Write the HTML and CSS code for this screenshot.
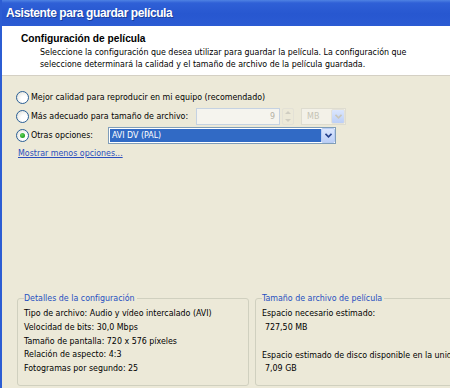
FILE: index.html
```html
<!DOCTYPE html>
<html lang="es">
<head>
    <meta charset="UTF-8">
    <meta name="viewport" content="width=device-width, initial-scale=1.0">
    <title>Asistente para guardar película</title>
    <link rel="stylesheet" href="styles.css">
</head>
<body>
    <div class="window">
        <div class="titlebar">Asistente para guardar película</div>

        <div class="header">
            <div class="header-title">Configuración de película</div>
            <div class="header-desc">
                Seleccione la configuración que desea utilizar para guardar la película. La configuración que<br>
                seleccione determinará la calidad y el tamaño de archivo de la película guardada.
            </div>
        </div>

        <div class="content">
            <div class="options">
                <div class="option-row">
                    <span class="radio"></span>
                    <span class="label">Mejor calidad para reproducir en mi equipo (recomendado)</span>
                </div>
                <div class="option-row">
                    <span class="radio"></span>
                    <span class="label">Más adecuado para tamaño de archivo:</span>
                    <span class="size-input">9</span>
                    <span class="spinner">
                        <span class="spin-arrow up"></span>
                        <span class="spin-arrow down"></span>
                    </span>
                    <span class="combo combo-disabled">
                        <span class="combo-text">MB</span>
                        <span class="combo-button">
                            <svg width="7" height="5" viewBox="0 0 7 5"><path d="M0.5 0.8 L3.5 3.8 L6.5 0.8" fill="none" stroke="#c9c7ba" stroke-width="1.6"/></svg>
                        </span>
                    </span>
                </div>
                <div class="option-row">
                    <span class="radio checked"></span>
                    <span class="label label-short">Otras opciones:</span>
                    <span class="combo combo-format">
                        <span class="combo-text selected">AVI DV (PAL)</span>
                        <span class="combo-button">
                            <svg width="7" height="5" viewBox="0 0 7 5"><path d="M0.5 0.8 L3.5 3.8 L6.5 0.8" fill="none" stroke="#24408c" stroke-width="1.6"/></svg>
                        </span>
                    </span>
                </div>
                <a class="link" href="#">Mostrar menos opciones...</a>
            </div>

            <div class="groups">
                <fieldset class="group group-details">
                    <legend>Detalles de la configuración</legend>
                    <div>Tipo de archivo: Audio y vídeo intercalado (AVI)</div>
                    <div>Velocidad de bits: 30,0 Mbps</div>
                    <div>Tamaño de pantalla: 720 x 576 píxeles</div>
                    <div>Relación de aspecto: 4:3</div>
                    <div>Fotogramas por segundo: 25</div>
                </fieldset>
                <fieldset class="group group-size">
                    <legend>Tamaño de archivo de película</legend>
                    <div>Espacio necesario estimado:</div>
                    <div class="value">727,50 MB</div>
                    <div class="blank"></div>
                    <div class="nowrap">Espacio estimado de disco disponible en la unidad C:</div>
                    <div class="value">7,09 GB</div>
                </fieldset>
            </div>
        </div>
    </div>
</body>
</html>
```

FILE: styles.css
```css
html, body {
    margin: 0;
    padding: 0;
}

body {
    font-family: 'DejaVu Sans Condensed', 'Liberation Sans', sans-serif;
    font-size: 8.8px;
    color: #000;
    background-color: #ece9d8;
}

.window {
    width: 450px;
    height: 388px;
    overflow: hidden;
    display: flex;
    flex-direction: column;
    border-left: 2px solid #2c5dd3;
    box-sizing: border-box;
}

.titlebar {
    height: 26px;
    flex-shrink: 0;
    line-height: 26px;
    padding-left: 4px;
    color: white;
    font-family: 'Liberation Sans', sans-serif;
    font-size: 12px;
    font-weight: bold;
    letter-spacing: -0.4px;
    text-shadow: 1px 1px 0 #1a3e9a;
    background: linear-gradient(#4f82e3 0, #2f60d6 3px, #2757d0 14px, #2b5bd3 26px);
}

.header {
    height: 50px;
    flex-shrink: 0;
    background-color: white;
    border-bottom: 1px solid #d4d0c4;
    padding: 7px 0 0 19px;
    box-sizing: border-box;
}

.header-title {
    font-family: 'Liberation Sans', sans-serif;
    font-weight: bold;
    font-size: 10.2px;
    line-height: 12px;
}

.header-desc {
    margin: 1px 0 0 19px;
    line-height: 12px;
}

.content {
    flex: 1;
    display: flex;
    flex-direction: column;
    padding: 12px 0 2px 14px;
}

.options {
    display: flex;
    flex-direction: column;
    flex-shrink: 0;
}

.option-row {
    height: 19px;
    flex-shrink: 0;
    display: flex;
    align-items: center;
}

.radio {
    width: 11px;
    height: 11px;
    flex-shrink: 0;
    border: 1px solid #2a5f96;
    border-radius: 50%;
    background: radial-gradient(circle at 65% 65%, #ffffff 30%, #dcdcd2 100%);
    display: flex;
    align-items: center;
    justify-content: center;
    margin-right: 2px;
}

.radio.checked::after {
    content: '';
    width: 5px;
    height: 5px;
    border-radius: 50%;
    background: radial-gradient(circle at 40% 35%, #62d25a, #21a121 70%);
}

.label {
    line-height: 19px;
    white-space: nowrap;
}

.label-short {
    width: 77px;
}

.size-input {
    width: 78px;
    height: 15px;
    margin-left: 8px;
    border: 1px solid #c5d2e2;
    background-color: #f5f4ee;
    color: #b4b2a5;
    text-align: right;
    line-height: 15px;
    padding-right: 4px;
    box-sizing: content-box;
}

.spinner {
    width: 12px;
    height: 17px;
    margin-left: 2px;
    display: flex;
    flex-direction: column;
    justify-content: space-around;
    align-items: center;
    border: 1px solid #e3e1d6;
    border-radius: 2px;
    box-sizing: border-box;
}

.spin-arrow {
    width: 0;
    height: 0;
    border-left: 3px solid transparent;
    border-right: 3px solid transparent;
}

.spin-arrow.up {
    border-bottom: 3px solid #cfcdc1;
}

.spin-arrow.down {
    border-top: 3px solid #cfcdc1;
}

.combo {
    height: 17px;
    display: flex;
    align-items: stretch;
    box-sizing: border-box;
    border: 1px solid #7f9db9;
    background-color: white;
}

.combo-disabled {
    width: 45px;
    margin-left: 7px;
    border-color: #dedcd0;
    background-color: #f3f1e8;
    color: #c5c3b5;
}

.combo-disabled .combo-text {
    padding-left: 5px;
}

.combo-disabled .combo-button {
    background-color: #f1efe6;
    border: 1px solid #e4e2d8;
}

.combo-format {
    width: 228px;
}

.combo-text {
    flex: 1;
    line-height: 15px;
    padding-left: 3px;
}

.combo-text.selected {
    background-color: #316ac5;
    color: white;
    margin: 1px 0 1px 1px;
    line-height: 13px;
    padding-left: 2px;
}

.combo-button {
    width: 14px;
    display: flex;
    align-items: center;
    justify-content: center;
    background: linear-gradient(#dbe6fd, #bccff7);
    border: 1px solid #b9cdf3;
    border-radius: 2px;
    box-sizing: border-box;
}

.link {
    margin: 1px 0 0 2px;
    color: #2a4dbc;
    line-height: 14px;
    align-self: flex-start;
}

.groups {
    margin-top: auto;
    display: flex;
    gap: 6px;
    padding-left: 1px;
}

.group {
    margin: 0;
    padding: 3px 6px;
    border: 1px solid #d0d0bf;
    border-radius: 3px;
    line-height: 13.75px;
    flex-shrink: 0;
    min-width: 0;
}

.group legend {
    color: #1f4fc0;
    padding: 0 2px 0 0;
    line-height: 12px;
}

.group-details {
    width: 232px;
    height: 94px;
    box-sizing: border-box;
}

.group-size {
    width: 240px;
    height: 94px;
    box-sizing: border-box;
}

.value {
    padding-left: 3px;
}

.blank {
    height: 14px;
}

.nowrap {
    white-space: nowrap;
}
```
